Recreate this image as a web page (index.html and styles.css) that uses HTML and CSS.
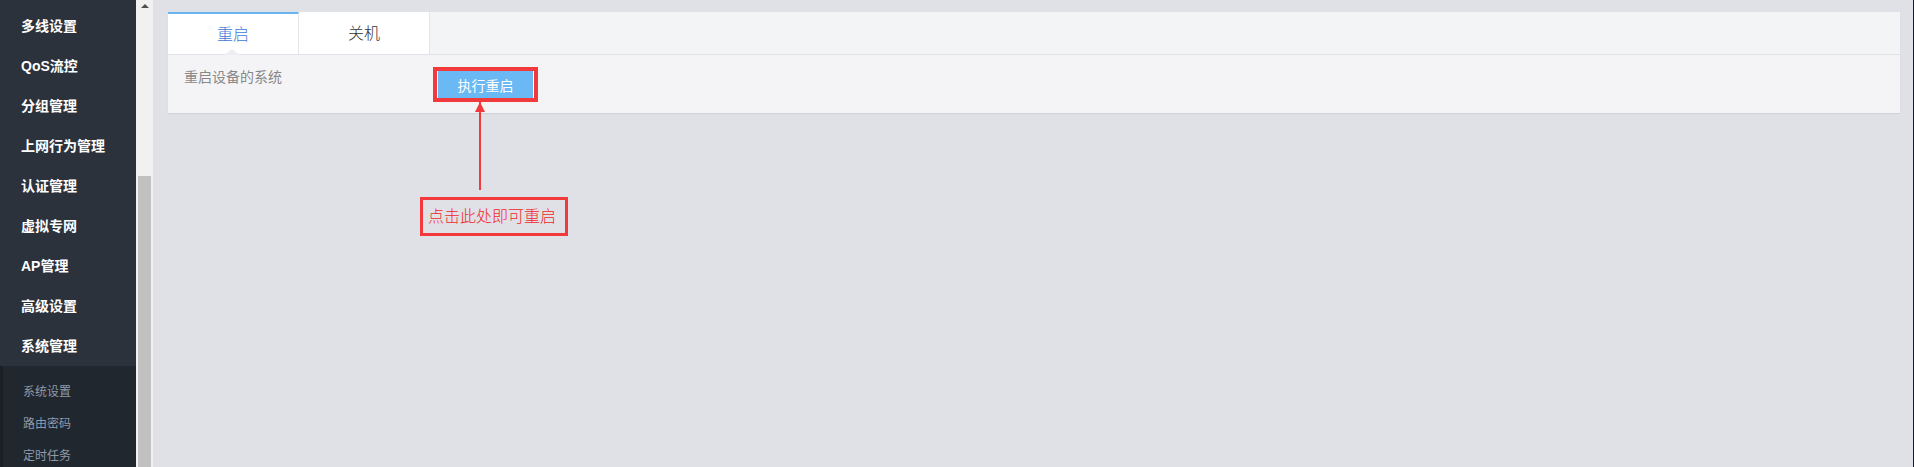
FILE: index.html
```html
<!DOCTYPE html>
<html lang="zh-CN">
<head>
  <meta charset="UTF-8">
  <title>系统管理</title>
  <link rel="stylesheet" href="styles.css">
</head>
<body>
  <div class="layout">
    <div class="sidebar">
      <ul class="menu">
        <li>多线设置</li>
        <li>QoS流控</li>
        <li>分组管理</li>
        <li>上网行为管理</li>
        <li>认证管理</li>
        <li>虚拟专网</li>
        <li>AP管理</li>
        <li>高级设置</li>
        <li>系统管理</li>
      </ul>
      <ul class="submenu">
        <li>系统设置</li>
        <li>路由密码</li>
        <li>定时任务</li>
      </ul>
    </div>
    <div class="scrollbar">
      <span class="scroll-up"></span>
      <span class="scroll-thumb"></span>
    </div>
    <div class="main">
      <div class="panel">
        <div class="tabs">
          <div class="tab active">重启</div>
          <div class="tab">关机</div>
        </div>
        <div class="panel-body">
          <span class="desc">重启设备的系统</span>
          <span class="mark"><button class="btn">执行重启</button></span>
        </div>
      </div>
      <!-- annotation from the screenshot -->
      <div class="arrow"></div>
      <div class="note">点击此处即可重启</div>
    </div>
  </div>
</body>
</html>
```

FILE: styles.css
```css
html, body { height: 100%; margin: 0; padding: 0; }
body { background: #dfe1e6; font: 13px/1.5 "Liberation Sans", "Noto Sans CJK SC", sans-serif; color: #333; overflow: hidden; }
ul { list-style: none; margin: 0; padding: 0; }

.layout { display: grid; grid-template-columns: 136px 17px 1fr; height: 467px; border-right: 1px solid #0f1b38; }

.sidebar { background: #2b323b; overflow: hidden; }
.menu { padding-top: 6px; }
.menu li { height: 40px; line-height: 40px; padding-left: 21px; color: #fff; font-weight: bold; font-size: 14px; }
.submenu { background: #21272e; border-left: 3px solid #1b2026; padding-top: 10px; height: 200px; }
.submenu li { height: 32px; line-height: 32px; padding-left: 20px; color: #8e9aab; font-size: 12px; }

.scrollbar { background: #f1f1f1; position: relative; }
.scroll-up {
  position: absolute; left: 5px; top: 4px; width: 0; height: 0;
  border-left: 4px solid transparent; border-right: 4px solid transparent;
  border-bottom: 4px solid #505050;
}
.scroll-thumb { position: absolute; left: 2px; right: 2px; top: 176px; bottom: 0; background: #c1c1c1; }

.main { position: relative; padding: 12px 13px 0 15px; }
.panel { background: #f4f4f6; box-shadow: 0 1px 1px rgba(0,0,0,.06); }
.tabs { display: flex; height: 42px; background: #f3f4f6; border-bottom: 1px solid #e1e3e8; }
.tab {
  width: 130px; background: #fff; border-right: 1px solid #e3e5ea;
  text-align: center; line-height: 44px; font-size: 16px; font-weight: 300; color: #333; position: relative;
}
.tab.active { color: #3f78d8; border-top: 2px solid #6ab4f0; line-height: 42px; }
.tab.active::after {
  content: ""; position: absolute; left: 56px; bottom: -1px; width: 0; height: 0;
  border-left: 8px solid transparent; border-right: 8px solid transparent;
  border-bottom: 6px solid #eceef1;
}

.panel-body { display: flex; align-items: flex-start; height: 58px; padding: 12px 16px 0; box-sizing: border-box; }
.desc { width: 249px; color: #888; font-size: 14px; line-height: 20px; }
.mark { display: inline-flex; border: 4px solid #f23a3c; }
.btn {
  width: 97px; height: 27px; padding: 0; border: none; border-left: 1px solid #fff; border-right: 1px solid #fff;
  background: #6ab8f4; color: #fff; font: 14px "Liberation Sans", "Noto Sans CJK SC", sans-serif; cursor: pointer;
}

.arrow { position: absolute; left: 326px; top: 102px; width: 2px; height: 88px; background: #f23a3c; }
.arrow::before {
  content: ""; position: absolute; left: -4px; top: 0; width: 0; height: 0;
  border-left: 5px solid transparent; border-right: 5px solid transparent;
  border-bottom: 10px solid #f23a3c;
}
.note {
  position: absolute; left: 267px; top: 197px; width: 137px; height: 33px;
  border: 3px solid #f23a3c; color: #f0282c; font-size: 16px; font-weight: 300; line-height: 33px; padding-left: 5px;
  box-sizing: content-box;
}
```
